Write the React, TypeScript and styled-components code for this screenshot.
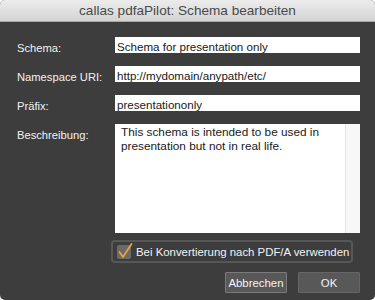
import React from "react";
import styled, { createGlobalStyle } from "styled-components";

const GlobalStyle = createGlobalStyle`
  html, body {
    margin: 0;
    padding: 0;
    background: #ffffff;
  }
  * {
    box-sizing: border-box;
  }
`;

const Window = styled.div`
  width: 375px;
  height: 300px;
  border-radius: 5px;
  overflow: hidden;
  background: #3d3d3d;
  font-family: "Liberation Sans", Arial, sans-serif;
  display: flex;
  flex-direction: column;
`;

const TitleBar = styled.div`
  height: 22px;
  flex-shrink: 0;
  background: linear-gradient(#ececec, #d4d4d4);
  border-bottom: 1px solid #a9a9a9;
  display: flex;
  align-items: center;
  justify-content: center;
  font-size: 13.6px;
  color: #4a4a4a;
`;

const Form = styled.div`
  padding: 15px 15px 0 17px;
  display: grid;
  grid-template-columns: 98px 1fr;
  row-gap: 13px;
`;

const Label = styled.label`
  font-size: 11.2px;
  color: #f2f2f2;
  height: 16px;
  line-height: 12px;
  padding-top: 5px;
  white-space: nowrap;
`;

const Field = styled.input`
  height: 16px;
  width: 100%;
  border: none;
  outline: none;
  margin: 0;
  padding: 2px 2px 0;
  background: #ffffff;
  color: #1a1a1a;
  font-family: "Liberation Sans", Arial, sans-serif;
  font-size: 11.6px;
  line-height: 14px;
`;

const DescriptionBox = styled.div`
  height: 109px;
  background: #ffffff;
  display: flex;
`;

const DescriptionText = styled.div`
  flex: 1;
  padding: 1px 4px 0 6px;
  font-size: 11.8px;
  line-height: 14px;
  color: #1a1a1a;
`;

const ScrollTrack = styled.div`
  width: 15px;
  background: #f7f7f7;
  border-left: 1px solid #e4e4e4;
`;

const Options = styled.div`
  grid-column: 2;
  margin-top: -6px;
  margin-left: -4px;
`;

const CheckGroup = styled.label`
  display: inline-flex;
  align-items: center;
  gap: 5px;
  height: 23px;
  padding: 0 2px 0 4px;
  border: 2px solid #575757;
  border-radius: 4px;
  font-size: 11.4px;
  color: #f2f2f2;
`;

const CheckBox = styled.span`
  position: relative;
  width: 14px;
  height: 14px;
  border-radius: 2px;
  background: #6a6a6a;
  flex-shrink: 0;

  svg {
    position: absolute;
    left: 1px;
    top: -2px;
  }
`;

const Buttons = styled.div`
  grid-column: 1 / span 2;
  display: flex;
  justify-content: flex-end;
  gap: 11px;
  margin-top: -4px;
`;

const Button = styled.button<{ $focused?: boolean }>`
  width: 62px;
  height: 21px;
  padding: 0;
  background: #585858;
  border: 1px solid ${(p) => (p.$focused ? "#7a7a7a" : "#666666")};
  border-radius: 1px;
  color: #f4f4f4;
  font-family: "Liberation Sans", Arial, sans-serif;
  font-size: 11.4px;
`;

export default function App() {
  return (
    <>
      <GlobalStyle />
      <Window>
        <TitleBar>callas pdfaPilot: Schema bearbeiten</TitleBar>
        <Form>
          <Label>Schema:</Label>
          <Field readOnly defaultValue="Schema for presentation only" />
          <Label>Namespace URI:</Label>
          <Field readOnly defaultValue="http://mydomain/anypath/etc/" />
          <Label>Präfix:</Label>
          <Field readOnly defaultValue="presentationonly" />
          <Label>Beschreibung:</Label>
          <DescriptionBox>
            <DescriptionText>
              This schema is intended to be used in presentation but not in real life.
            </DescriptionText>
            <ScrollTrack />
          </DescriptionBox>
          <Options>
            <CheckGroup>
              <CheckBox>
                <svg width="15" height="16" viewBox="0 0 15 16">
                  <path d="M1.5 9 L5 14 L13.5 1" fill="none" stroke="#e9a23b" strokeWidth="1.8" strokeLinecap="round" strokeLinejoin="round" />
                </svg>
              </CheckBox>
              Bei Konvertierung nach PDF/A verwenden
            </CheckGroup>
          </Options>
          <Buttons>
            <Button $focused>Abbrechen</Button>
            <Button>OK</Button>
          </Buttons>
        </Form>
      </Window>
    </>
  );
}
